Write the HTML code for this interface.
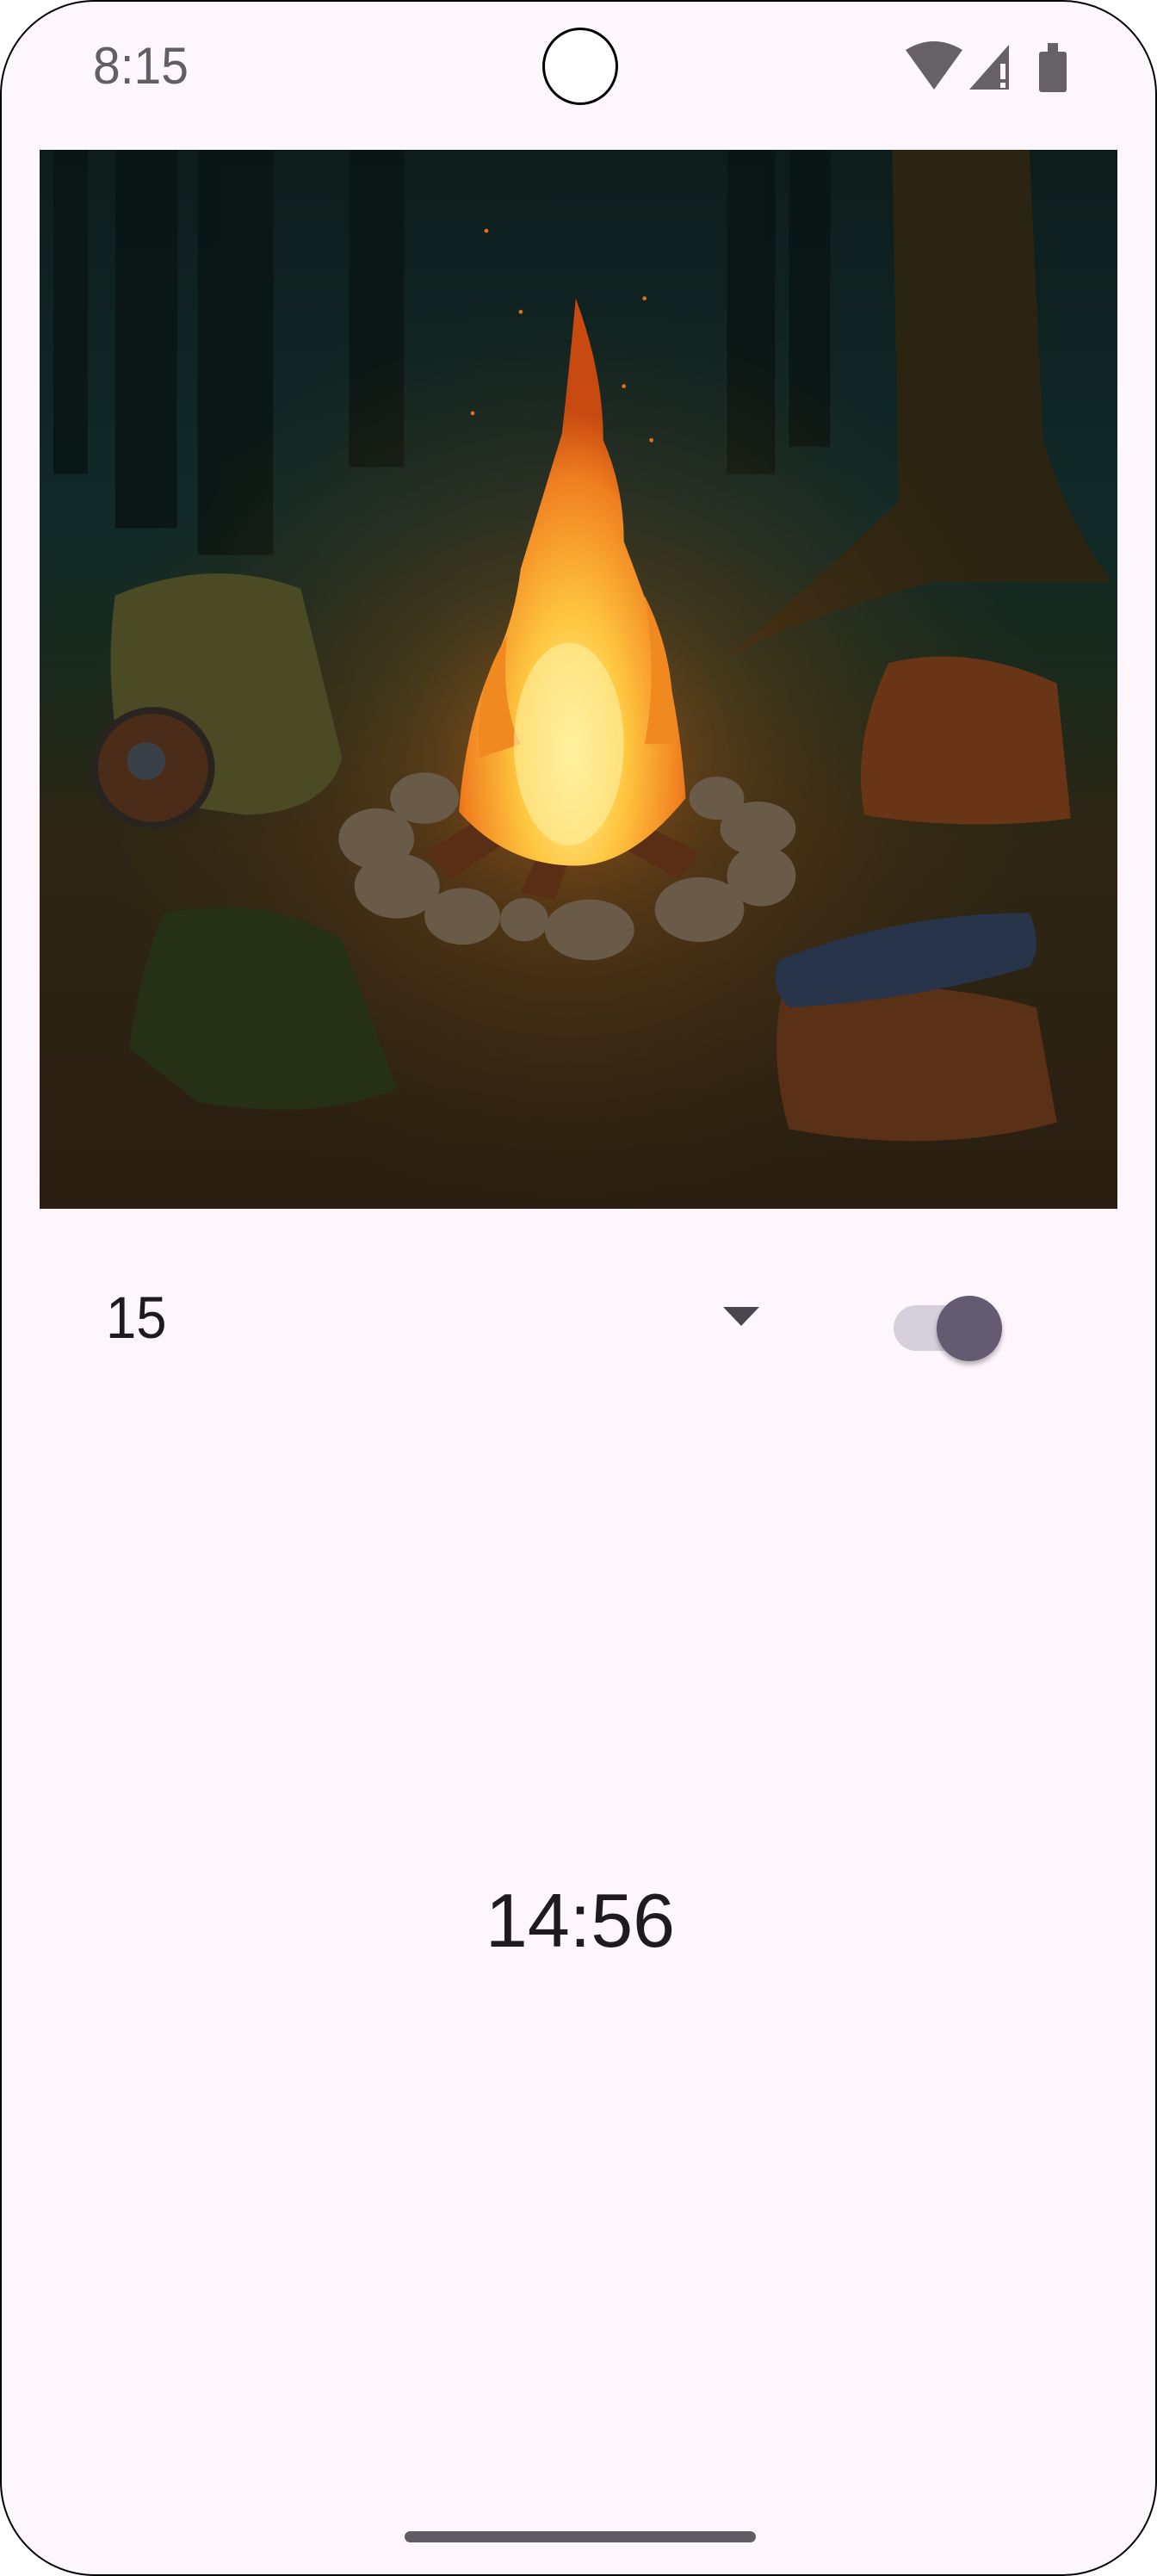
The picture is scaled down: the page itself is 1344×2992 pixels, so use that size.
<!DOCTYPE html>
<html><head><meta charset="utf-8"><style>
html,body{margin:0;padding:0}
body{width:1344px;height:2992px;background:#fff;position:relative;overflow:hidden;font-family:"Liberation Sans",sans-serif}
.screen{position:absolute;left:0;top:0;width:1340px;height:2988px;background:#fdf7fd;border:2px solid #000;border-radius:110px;overflow:hidden}
.t{position:absolute;color:#1d1b20}
</style></head><body>
<div class="screen">
<div class="t" style="left:106px;top:40px;font-size:60px;color:#625e66;transform:scaleX(0.95);transform-origin:left">8:15</div>
<div style="position:absolute;left:628px;top:30px;width:82px;height:84px;border:3px solid #000;border-radius:50%;background:#fff"></div>
<svg style="position:absolute;left:1048px;top:44px" width="200" height="62" viewBox="0 0 200 62">
<path d="M2 12 Q35 -8 68 12 L35 58 Z" fill="#656167"/>
<path d="M76 58 L122 6 L122 58 Z" fill="#656167"/>
<rect x="112" y="28" width="6" height="18" fill="#fdf7fd"/><rect x="112" y="50" width="6" height="6" fill="#fdf7fd"/>
<rect x="157" y="14" width="32" height="47" rx="3" fill="#656167"/><rect x="167" y="4" width="12" height="12" fill="#656167"/>
</svg>
<svg style="position:absolute;left:44px;top:172px" width="1252" height="1230" viewBox="0 0 1568 1568" preserveAspectRatio="none">
<defs>
<linearGradient id="bg" x1="0" y1="0" x2="0" y2="1">
<stop offset="0" stop-color="#0d1d1c"/><stop offset="0.35" stop-color="#112a28"/><stop offset="0.5" stop-color="#1a2a1c"/><stop offset="0.65" stop-color="#2e2614"/><stop offset="1" stop-color="#2a1e10"/></linearGradient>
<radialGradient id="glow" cx="770" cy="900" r="700" gradientUnits="userSpaceOnUse">
<stop offset="0" stop-color="#c46a1c" stop-opacity="0.75"/><stop offset="0.35" stop-color="#7a4a18" stop-opacity="0.45"/><stop offset="1" stop-color="#3a2a10" stop-opacity="0"/></radialGradient>
<radialGradient id="fl" cx="0.5" cy="0.8" r="0.6">
<stop offset="0" stop-color="#fff3a0"/><stop offset="0.4" stop-color="#ffc640"/><stop offset="0.8" stop-color="#f08020"/><stop offset="1" stop-color="#c84a10"/></radialGradient>
</defs>
<rect width="1568" height="1568" fill="url(#bg)"/>
<g fill="#0a1614" opacity="0.9">
<rect x="110" y="0" width="90" height="560"/><rect x="230" y="0" width="110" height="600"/>
<rect x="450" y="0" width="80" height="470"/><rect x="1000" y="0" width="70" height="480"/><rect x="1090" y="0" width="60" height="440"/><rect x="20" y="0" width="50" height="480"/>
</g>
<path d="M1240 0 L1440 0 L1460 430 Q1500 560 1560 640 L1300 640 Q1080 700 990 760 Q1150 620 1250 520 Z" fill="#2c2412"/>
<rect width="1568" height="1568" fill="url(#glow)"/>
<g fill="#6a5a48"><ellipse cx="560" cy="960" rx="50" ry="38"/><ellipse cx="490" cy="1020" rx="55" ry="45"/><ellipse cx="520" cy="1090" rx="62" ry="48"/><ellipse cx="615" cy="1135" rx="55" ry="42"/><ellipse cx="705" cy="1140" rx="35" ry="32"/><ellipse cx="800" cy="1155" rx="65" ry="45"/><ellipse cx="960" cy="1125" rx="65" ry="48"/><ellipse cx="1050" cy="1075" rx="50" ry="45"/><ellipse cx="1045" cy="1005" rx="55" ry="40"/><ellipse cx="985" cy="960" rx="40" ry="32"/></g>
<g fill="#5a2e14"><path d="M560 1040 L740 930 L770 960 L600 1080Z"/><path d="M700 1100 L770 940 L800 960 L750 1110Z"/><path d="M800 960 L960 1040 L930 1080 L790 1000Z"/></g>
<path d="M610 980 Q620 850 660 760 Q690 700 700 620 Q730 520 760 420 Q770 330 780 220 Q820 330 820 430 Q850 500 850 580 Q880 660 900 720 Q930 820 940 960 Q860 1060 780 1060 Q680 1060 610 980Z" fill="url(#fl)"/>
<path d="M640 900 Q630 800 680 720 Q670 820 700 880Z" fill="#f08a20"/>
<path d="M880 880 Q900 780 880 660 Q930 760 920 880Z" fill="#f08a20"/>
<ellipse cx="770" cy="880" rx="80" ry="150" fill="#fff0a0" opacity="0.6"/>
<g fill="#e0701c"><circle cx="650" cy="120" r="3"/><circle cx="880" cy="220" r="3"/><circle cx="700" cy="240" r="3"/><circle cx="850" cy="350" r="3"/><circle cx="630" cy="390" r="3"/><circle cx="890" cy="430" r="3"/></g>
<g fill="#4a4a24"><path d="M110 660 Q250 600 380 650 L440 900 Q420 980 300 985 L130 960 Q90 800 110 660Z"/></g>
<circle cx="165" cy="915" r="85" fill="#4a2c18" stroke="#2a2420" stroke-width="10"/><circle cx="155" cy="905" r="28" fill="#3a4048"/>
<path d="M180 1130 Q330 1100 440 1170 L520 1390 Q400 1440 230 1410 L130 1330 Q150 1200 180 1130Z" fill="#263016"/>
<path d="M1235 760 Q1350 730 1480 790 L1500 990 Q1350 1010 1200 985 Q1180 880 1235 760Z" fill="#6a3416"/>
<path d="M1080 1250 Q1280 1220 1450 1270 L1480 1440 Q1300 1490 1090 1450 Q1060 1340 1080 1250Z" fill="#5a3016"/>
<path d="M1075 1200 Q1250 1130 1440 1130 Q1460 1180 1440 1210 Q1270 1260 1090 1270 Q1060 1240 1075 1200Z" fill="#27344a"/>
</svg>
<div class="t" style="left:121px;top:1489px;font-size:69px;transform:scaleX(0.92);transform-origin:left">15</div>
<svg style="position:absolute;left:838px;top:1516px" width="42" height="22"><path d="M0 0 L42 0 L21 22Z" fill="#49454f"/></svg>
<div style="position:absolute;left:1036px;top:1514px;width:112px;height:53px;border-radius:27px;background:#d5d0da"></div>
<div style="position:absolute;left:1086px;top:1503px;width:76px;height:76px;border-radius:50%;background:#625b71;box-shadow:0 4px 6px rgba(0,0,0,0.3)"></div>
<div class="t" style="left:0;width:1344px;text-align:center;top:2178px;font-size:88px">14:56</div>
<div style="position:absolute;left:468px;top:2938px;width:408px;height:13px;border-radius:7px;background:#5f5c63"></div>
</div>
</body></html>
